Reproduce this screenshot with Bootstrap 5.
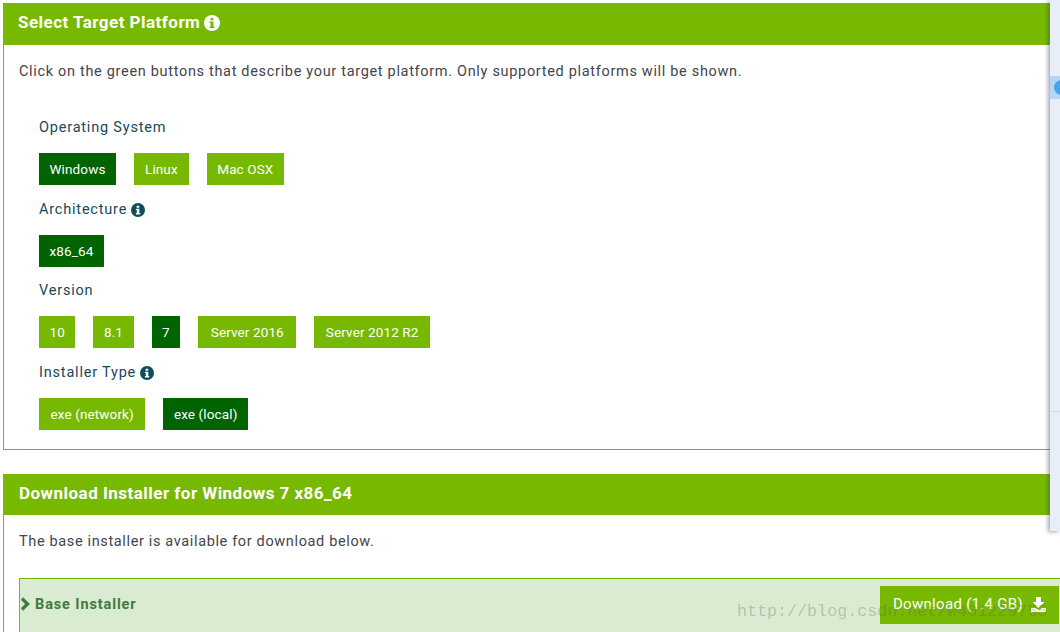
<!DOCTYPE html>
<html lang="en">
<head>
  <meta charset="UTF-8" />
  <meta name="viewport" content="width=device-width, initial-scale=1" />
  <title>Select Target Platform</title>
  <link href="https://cdn.jsdelivr.net/npm/bootstrap@5.3.0/dist/css/bootstrap.min.css" rel="stylesheet" />
  <style>
    html, body { height: 632px; overflow: hidden; }
    body { font-family: Roboto, "Liberation Sans", sans-serif; font-size: 14px; color: #3f3f46; background: #fff; position: relative; padding: 3px 0 0 3px; }
    .nv-panel { border: 1px solid #7fae2f; border-right: 0; }
    .nv-panel-second { border-bottom: 0; margin-top: 24px; }
    .nv-head { background: #76b900; color: #fff; font-weight: 700; font-size: 17px; letter-spacing: .47px; padding-left: 15px; margin: -1px 0 0 -1px; }
    .nv-head-first { height: 42px; padding-bottom: 2px; }
    .nv-head-second { height: 41px; padding-left: 16px; }
    .nv-intro { font-size: 14.5px; letter-spacing: .68px; line-height: 20px; padding: 17px 0 0 15px; color: #44444c; }
    .nv-options { padding: 35px 0 5.5px 35px; }
    .nv-label { font-size: 14.5px; line-height: 20px; letter-spacing: .8px; color: #17495a; padding-top: 1px; margin-bottom: 15px; }
    .nv-row { margin-bottom: 13.5px; gap: 18px; }
    .nv-btn { background: #76b900; color: #fff; border: 0; border-radius: 0; height: 32px; padding: 0 10.5px; font-size: 13.5px; letter-spacing: .12px; line-height: 32px; }
    .nv-btn.nv-on { background: #006400; }
    .nv-btn.nv-btn-m { padding: 0 11px; }
    .nv-btn.nv-btn-l { padding: 0 11.5px; }
    .nv-btn.nv-btn-xl { padding: 0 12.5px; }
    .nv-note { font-size: 14.5px; letter-spacing: .64px; line-height: 20px; padding: 17px 0 26px 15px; color: #44444c; }
    .nv-base { margin-left: 15px; height: 70px; background: #d9ecd1; border: 1px solid #76b900; border-right: 0; border-bottom: 0; padding: 7px 1px 0 0; }
    .nv-base-title { font-weight: 700; font-size: 14.5px; letter-spacing: .88px; color: #417a3f; margin-top: 8px; }
    .nv-download { background: #76b900; color: #fff; border: 0; border-radius: 0; width: 179px; height: 38px; font-size: 15px; letter-spacing: .3px; padding: 0; }
    .nv-side { position: absolute; top: 0; left: 1050px; width: 10px; height: 531px; background: #e8eef7; box-shadow: -2px 1px 4px rgba(60,60,70,.45); }
    .nv-side-mark { position: absolute; top: 76px; left: 0; width: 10px; height: 23px; background: #b4d5f5; overflow: hidden; }
    .nv-side-mark::after { content: ""; position: absolute; left: 4px; top: 4px; width: 15px; height: 15px; border-radius: 50%; background: #47a3ea; }
    .nv-side-line { position: absolute; top: 411px; left: 0; width: 10px; height: 1px; background: #d3d9e3; }
    .nv-watermark { position: absolute; left: 737px; top: 601px; font-family: "Liberation Mono", monospace; font-size: 16.7px; line-height: 22px; color: rgba(90,90,90,.3); white-space: nowrap; }
  </style>
</head>
<body>

<section class="nv-panel">
  <div class="nv-head nv-head-first d-flex align-items-center gap-1">
    <span>Select Target Platform</span>
    <svg width="16" height="16" viewBox="0 0 16 16"><circle cx="8" cy="8" r="8" fill="#fff"/><path d="M6.4 3h3v2.3h-3zM5.600 6.500h3.900v5h1v1.600H5.600v-1.600h1v-3.400h-1z" fill="#76b900"/></svg>
  </div>
  <div class="nv-intro">Click on the green buttons that describe your target platform. Only supported platforms will be shown.</div>
  <div class="nv-options">
    <div class="nv-label">Operating System</div>
    <div class="nv-row d-flex">
      <button type="button" class="btn nv-btn nv-on">Windows</button>
      <button type="button" class="btn nv-btn nv-btn-m">Linux</button>
      <button type="button" class="btn nv-btn">Mac OSX</button>
    </div>
    <div class="nv-label d-flex align-items-center gap-1">
      <span>Architecture</span>
      <svg width="14" height="14" viewBox="0 0 16 16"><circle cx="8" cy="8" r="8" fill="#0f4c5c"/><path d="M6.4 3h3v2.3h-3zM5.600 6.500h3.900v5h1v1.600H5.600v-1.600h1v-3.400h-1z" fill="#fff"/></svg>
    </div>
    <div class="nv-row d-flex">
      <button type="button" class="btn nv-btn nv-on">x86_64</button>
    </div>
    <div class="nv-label">Version</div>
    <div class="nv-row d-flex">
      <button type="button" class="btn nv-btn">10</button>
      <button type="button" class="btn nv-btn">8.1</button>
      <button type="button" class="btn nv-btn nv-on">7</button>
      <button type="button" class="btn nv-btn nv-btn-xl">Server 2016</button>
      <button type="button" class="btn nv-btn nv-btn-l">Server 2012 R2</button>
    </div>
    <div class="nv-label d-flex align-items-center gap-1">
      <span>Installer Type</span>
      <svg width="14" height="14" viewBox="0 0 16 16"><circle cx="8" cy="8" r="8" fill="#0f4c5c"/><path d="M6.4 3h3v2.3h-3zM5.600 6.500h3.900v5h1v1.600H5.600v-1.600h1v-3.400h-1z" fill="#fff"/></svg>
    </div>
    <div class="nv-row d-flex">
      <button type="button" class="btn nv-btn nv-btn-l">exe (network)</button>
      <button type="button" class="btn nv-btn nv-on">exe (local)</button>
    </div>
  </div>
</section>

<section class="nv-panel nv-panel-second">
  <div class="nv-head nv-head-second d-flex align-items-center">Download Installer for Windows 7 x86_64</div>
  <div class="nv-note">The base installer is available for download below.</div>
  <div class="nv-base d-flex justify-content-between align-items-start">
    <div class="nv-base-title d-flex align-items-center gap-1">
      <svg width="11" height="14" viewBox="0 0 11 14"><path d="M2 1.500 7.500 7 2 12.500" fill="none" stroke="#417a3f" stroke-width="3.400"/></svg>
      <span>Base Installer</span>
    </div>
    <button type="button" class="btn nv-download d-flex align-items-center justify-content-center gap-2">
      <span>Download (1.4 GB)</span>
      <svg width="15" height="15" viewBox="0 0 15 15"><path d="M5 0h5v5h3.500L7.500 11 1.500 5H5zM0 11h4l3.500 2 3.500-2h4v4H0z" fill="#fff"/></svg>
    </button>
  </div>
</section>

<div class="nv-watermark">http://blog.csdn.net/w401229755</div>

<aside class="nv-side">
  <div class="nv-side-mark"></div>
  <div class="nv-side-line"></div>
</aside>

<script src="https://cdn.jsdelivr.net/npm/bootstrap@5.3.0/dist/js/bootstrap.bundle.min.js"></script>
</body>
</html>
